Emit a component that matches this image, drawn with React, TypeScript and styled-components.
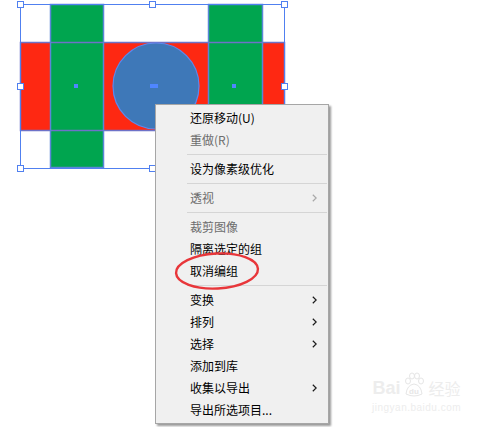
import React from "react";
import styled, { createGlobalStyle } from "styled-components";

const GlobalStyle = createGlobalStyle`
  html, body { margin: 0; padding: 0; background: #ffffff; }
  body { font-family: "Noto Sans CJK SC", "Noto Sans", sans-serif; }
`;

const Stage = styled.div`
  position: relative;
  width: 493px;
  height: 427px;
  overflow: hidden;
  background: #ffffff;
`;

const Artwork = styled.svg`
  display: block;
`;

const Menu = styled.ul`
  position: absolute;
  left: 155px;
  top: 104px;
  width: 172px;
  margin: 0;
  padding: 2px 0;
  list-style: none;
  background: #f0f0f0;
  border: 1px solid #a6a6a6;
  box-shadow: 2px 2px 2px rgba(0, 0, 0, 0.4);
  font-family: "Noto Sans CJK SC", "Microsoft YaHei", sans-serif;
  font-size: 12px;
`;

const Item = styled.li<{ $disabled?: boolean }>`
  display: flex;
  align-items: center;
  justify-content: space-between;
  height: 22px;
  padding: 0 11px 0 34px;
  color: ${(p) => (p.$disabled ? "#6d6d6d" : "#000000")};
  line-height: 22px;
  white-space: nowrap;
`;

const Arrow = styled.svg<{ $disabled?: boolean }>`
  width: 5px;
  height: 8px;
  color: ${(p) => (p.$disabled ? "#a8a8a8" : "#1a1a1a")};
`;

const Separator = styled.li`
  height: 1px;
  margin: 3px 1px 3px 31px;
  background: #d5d5d5;
`;

const Annotation = styled.svg`
  position: absolute;
  left: 170px;
  top: 248px;
  pointer-events: none;
`;

const Watermark = styled.div`
  position: absolute;
  left: 372px;
  top: 372px;
  display: flex;
  flex-direction: column;
  align-items: center;
  color: #ededed;
  font-family: "Liberation Sans", Arial, sans-serif;
`;

const WatermarkBrand = styled.div`
  display: flex;
  align-items: flex-end;
  gap: 2px;
  font-size: 18px;
  font-weight: bold;
  line-height: 19px;
`;

const WatermarkSite = styled.div`
  margin-top: 4px;
  font-size: 10px;
  line-height: 12px;
  letter-spacing: 0.5px;
`;

const WatermarkCjk = styled.span`
  font-family: "Noto Sans CJK SC", sans-serif;
  font-size: 16px;
  font-weight: normal;
  margin-left: 2px;
`;

type Entry =
  | { type: "sep" }
  | { type: "item"; label: string; disabled?: boolean; sub?: boolean };

const entries: Entry[] = [
  { type: "item", label: "还原移动(U)" },
  { type: "item", label: "重做(R)", disabled: true },
  { type: "sep" },
  { type: "item", label: "设为像素级优化" },
  { type: "sep" },
  { type: "item", label: "透视", disabled: true, sub: true },
  { type: "sep" },
  { type: "item", label: "裁剪图像", disabled: true },
  { type: "item", label: "隔离选定的组" },
  { type: "item", label: "取消编组" },
  { type: "sep" },
  { type: "item", label: "变换", sub: true },
  { type: "item", label: "排列", sub: true },
  { type: "item", label: "选择", sub: true },
  { type: "item", label: "添加到库" },
  { type: "item", label: "收集以导出", sub: true },
  { type: "item", label: "导出所选项目..." },
];

const SEL = "#5080f0";

const Handle = ({ x, y }: { x: number; y: number }) => (
  <rect x={x - 3} y={y - 3} width={6} height={6} fill="#ffffff" stroke={SEL} strokeWidth={1} />
);

export default function App() {
  return (
    <>
      <GlobalStyle />
      <Stage>
        <Artwork width={493} height={427} viewBox="0 0 493 427">
          <rect x={20.5} y={42.5} width={264} height={88} fill="#fe2812" />
          <rect x={50.5} y={4.5} width={53} height={163} fill="#00a54f" />
          <rect x={208.5} y={4.5} width={54} height={163} fill="#00a54f" />
          <circle cx={156} cy={86} r={43} fill="#3e78b8" />
          <g fill="none">
            <rect x={20.5} y={42.5} width={264} height={88} stroke="#6e72c8" strokeWidth={1.5} />
            <rect x={50.5} y={4.5} width={53} height={163} stroke="#5b86d8" strokeWidth={1.5} />
            <rect x={208.5} y={4.5} width={54} height={163} stroke="#5b86d8" strokeWidth={1.5} />
            <circle cx={156} cy={86} r={43} stroke="#5a8af0" strokeWidth={1.2} />
          </g>
          <rect x={20.5} y={4.5} width={264} height={164} fill="none" stroke={SEL} strokeWidth={1} />
          <Handle x={20.5} y={4.5} />
          <Handle x={152.5} y={4.5} />
          <Handle x={284.5} y={4.5} />
          <Handle x={20.5} y={86.5} />
          <Handle x={284.5} y={86.5} />
          <Handle x={20.5} y={168.5} />
          <Handle x={152.5} y={168.5} />
          <rect x={74} y={84} width={4} height={4} fill="#4f86ff" />
          <rect x={150} y={84} width={8} height={4} fill="#4f86ff" />
          <rect x={232} y={84} width={4} height={4} fill="#4f86ff" />
        </Artwork>

        <Menu>
          {entries.map((e, i) =>
            e.type === "sep" ? (
              <Separator key={i} />
            ) : (
              <Item key={i} $disabled={e.disabled}>
                <span>{e.label}</span>
                {e.sub && (
                  <Arrow $disabled={e.disabled} viewBox="0 0 5 8">
                    <path d="M0.8 0.8 L4.2 4 L0.8 7.2" fill="none" stroke="currentColor" strokeWidth={1.2} />
                  </Arrow>
                )}
              </Item>
            )
          )}
        </Menu>

        <Annotation width={100} height={50} viewBox="0 0 100 50">
          <ellipse
            cx={47}
            cy={23}
            rx={41}
            ry={17.5}
            fill="none"
            stroke="#e8363a"
            strokeWidth={2.4}
            transform="rotate(-3 47 23)"
          />
        </Annotation>

        <Watermark>
          <WatermarkBrand>
            <span>Bai</span>
            <svg width={22} height={26} viewBox="0 0 22 26">
              <g fill="none" stroke="#e6e6e6" strokeWidth={1}>
                <ellipse cx={5} cy={9} rx={2.5} ry={3} />
                <ellipse cx={9} cy={4} rx={2.5} ry={3} />
                <ellipse cx={14} cy={4} rx={2.5} ry={3} />
                <ellipse cx={18} cy={9} rx={2.5} ry={3} />
                <path d="M3 22 Q4 13 11 12 Q18 13 19 22 Q11 26 3 22 Z" />
              </g>
              <text x={11} y={22} fontSize={8} textAnchor="middle" fill="#e6e6e6" fontFamily="Liberation Sans, sans-serif">
                du
              </text>
            </svg>
            <WatermarkCjk>经验</WatermarkCjk>
          </WatermarkBrand>
          <WatermarkSite>jingyan.baidu.com</WatermarkSite>
        </Watermark>
      </Stage>
    </>
  );
}
